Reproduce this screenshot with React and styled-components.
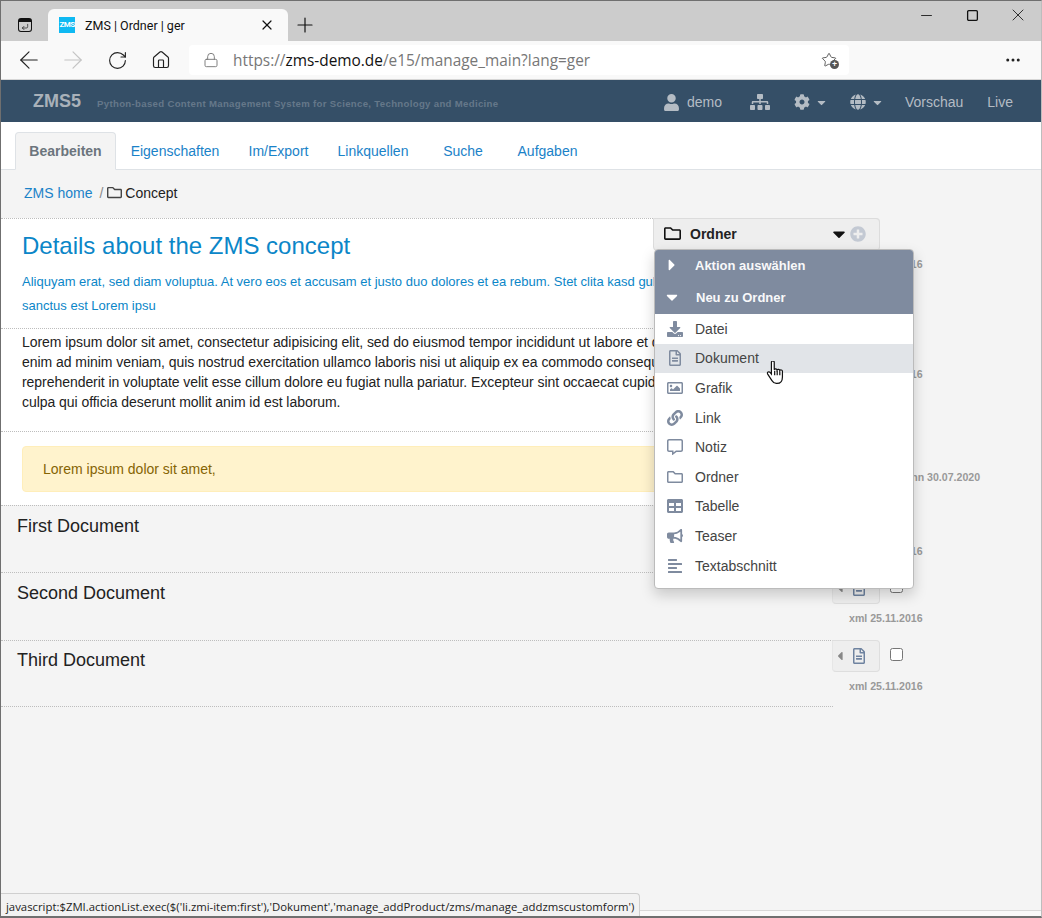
import React from 'react';
import styled, { createGlobalStyle } from 'styled-components';
import { ArrowLeft, ArrowRight, RotateCw, Home, Lock, Plus, X, Minus, Square, MoreHorizontal, Star, CornerDownLeft } from 'lucide-react';
import {
  FaUser, FaSitemap, FaCog, FaGlobe, FaRegFolder, FaCaretDown, FaCaretRight, FaCaretLeft,
  FaPlusCircle, FaDownload, FaRegFileAlt, FaRegImage, FaLink, FaRegCommentAlt, FaTable, FaBullhorn, FaAlignLeft,
} from 'react-icons/fa';

const GlobalStyle = createGlobalStyle`
  html, body { margin: 0; padding: 0; background: #f4f4f4; }
  body { font-family: "Liberation Sans", Arial, sans-serif; font-size: 14px; color: #222; }
  * { box-sizing: border-box; }
`;

const Window = styled.div`
  position: relative;
  width: 1042px;
  height: 918px;
  overflow: hidden;
  background: #f4f4f4;
  border: 1px solid #6f6f6f;
  border-bottom: 2px solid #6f6f6f;
  border-right: 1px solid #bdbdbd;
`;

const TabStrip = styled.div`
  height: 40px;
  background: #cccccc;
  display: flex;
  align-items: flex-end;
  padding-left: 47px;
`;

const WorkspaceIcon = styled.div`
  position: absolute;
  left: 17px;
  top: 17px;
  width: 14px;
  height: 14px;
  border: 1.500px solid #111;
  border-top-width: 4px;
  border-radius: 3px;
  display: flex;
  align-items: center;
  justify-content: center;
  color: #111;
`;

const BrowserTab = styled.div`
  width: 240px;
  height: 32px;
  background: #f9f9f9;
  border-radius: 6px 6px 0 0;
  display: flex;
  align-items: center;
  padding: 0 13px 0 11px;
  font-family: Roboto, sans-serif;
  font-size: 12.5px;
  color: #111;
`;

const Favicon = styled.span`
  width: 16px;
  height: 16px;
  background: #0fb9f2;
  color: #fff;
  font-size: 8px;
  line-height: 16px;
  text-align: center;
  font-weight: 700;
  margin-right: 10px;
  letter-spacing: -0.6px;
`;

const TabTitle = styled.span`
  flex: 1;
`;

const NewTab = styled.div`
  margin: 0 0 4px 5px;
  display: flex;
  color: #111;
`;

const WindowControls = styled.div`
  position: absolute;
  top: 4px;
  right: 0;
  display: flex;
  color: #111;
`;

const ControlSlot = styled.span`
  width: 46px;
  height: 20px;
  display: flex;
  align-items: center;
  justify-content: center;
`;

const Toolbar = styled.div`
  height: 39px;
  background: #f9f9f9;
  border-bottom: 1px solid #d6d6d6;
  display: flex;
  align-items: center;
  padding-left: 6px;
`;

const NavButton = styled.span`
  display: flex;
  justify-content: center;
  width: 44px;
  color: ${(p) => (p.$off ? '#c4c4c4' : '#222')};
`;

const AddressBar = styled.div`
  width: 660px;
  height: 30px;
  margin-left: 6px;
  background: #fff;
  border-radius: 4px;
  display: flex;
  align-items: center;
  padding: 0 12px 0 14px;
  font-family: "Open Sans", sans-serif;
  font-size: 15.4px;
  color: #777;
`;

const Url = styled.span`
  margin-left: 14px;
  flex: 1;
  b { font-weight: 400; color: #111; }
`;

const FavWrap = styled.span`
  position: relative;
  display: flex;
  color: #555;
  &::after {
    content: '+';
    position: absolute;
    right: -2px;
    bottom: -1px;
    width: 9px;
    height: 9px;
    border-radius: 50%;
    background: #555;
    color: #fff;
    font-size: 9px;
    line-height: 8px;
    text-align: center;
    font-weight: 700;
  }
`;

const MoreButton = styled.span`
  display: flex;
  margin-left: 155px;
  color: #222;
`;

const NavBar = styled.nav`
  height: 42px;
  background: #354f67;
  display: flex;
  align-items: center;
  padding: 2px 0 0 32px;
  color: #b4bcc4;
`;

const Brand = styled.span`
  font-size: 18px;
  font-weight: 700;
  color: #a9b1b9;
  margin-top: -2px;
`;

const Slogan = styled.span`
  margin: 3px 0 0 16px;
  font-size: 9.6px;
  font-weight: 700;
  letter-spacing: 0.33px;
  color: #65788a;
  flex: 1;
`;

const NavItem = styled.span`
  display: flex;
  align-items: center;
  gap: ${(p) => p.$gap || 0}px;
  margin-right: ${(p) => p.$mr}px;
  font-size: 14px;
`;

const TabBar = styled.div`
  height: 48px;
  background: #fff;
  border-bottom: 1px solid #dee2e6;
  display: flex;
  align-items: flex-end;
  padding-left: 14px;
`;

const Tab = styled.a`
  height: 38px;
  width: ${(p) => p.$w}px;
  margin-bottom: -1px;
  display: flex;
  align-items: center;
  justify-content: center;
  font-size: 14px;
  color: ${(p) => (p.$active ? '#6c757d' : '#1a82c8')};
  font-weight: ${(p) => (p.$active ? 700 : 400)};
  background: ${(p) => (p.$active ? '#f4f4f4' : 'transparent')};
  border: 1px solid ${(p) => (p.$active ? '#dee2e6' : 'transparent')};
  border-bottom-color: ${(p) => (p.$active ? '#f4f4f4' : 'transparent')};
  border-radius: 4px 4px 0 0;
`;

const Breadcrumb = styled.div`
  height: 48px;
  display: flex;
  align-items: center;
  padding: 0 0 3px 23px;
  font-size: 14px;
  color: #222;
`;

const Crumb = styled.a`
  color: #1a82c8;
`;

const CrumbDivider = styled.span`
  color: #8a8a8a;
  margin: 0 4px 0 7px;
`;

const CrumbIcon = styled.span`
  display: flex;
  margin-right: 3px;
  color: #444;
`;

const Row = styled.section`
  display: grid;
  grid-template-columns: 832px 1fr;
  height: ${(p) => p.$h}px;
`;

const RowMain = styled.div`
  border-top: 1px dotted #bdbdbd;
  background: ${(p) => (p.$plain ? 'transparent' : '#fff')};
  padding: ${(p) => p.$pad};
  ${(p) => p.$last && 'border-bottom: 1px dotted #bdbdbd;'}
`;

const RowSide = styled.div`
  display: grid;
  grid-template-columns: 48px auto;
  grid-template-rows: 32px auto;
  column-gap: 10px;
  row-gap: 8px;
  align-content: start;
  justify-content: start;
  align-items: center;
  margin-left: -1px;
`;

const ActionBox = styled.div`
  height: 32px;
  background: #eeeeee;
  border: 1px solid #dedede;
  border-left-color: #e6e6e6;
  border-radius: 0 4px 4px 4px;
  display: flex;
  align-items: center;
  gap: 4px;
  color: #6f83a0;
`;

const CaretSlot = styled.span`
  display: flex;
  color: #888;
`;

const Check = styled.input.attrs({ type: 'checkbox' })`
  appearance: none;
  width: 13px;
  height: 13px;
  margin: -3px 0 0;
  background: #fff;
  border: 1px solid #767676;
  border-radius: 2.5px;
`;

const Meta = styled.div`
  grid-column: 1 / 3;
  padding-left: ${(p) => p.$indent || 17}px;
  font-size: 10.6px;
  font-weight: 700;
  color: #999;
  white-space: nowrap;
`;

const Title = styled.h1`
  margin: 0;
  font-size: 24px;
  font-weight: 400;
  line-height: 30px;
  color: #0b86c8;
`;

const Teaser = styled.p`
  margin: 9px 0 0;
  font-size: 13px;
  line-height: 24px;
  color: #0b86c8;
  white-space: nowrap;
`;

const Body = styled.p`
  margin: 0;
  font-size: 14px;
  line-height: 20px;
  letter-spacing: -0.05px;
  color: #222;
  white-space: nowrap;
`;

const Alert = styled.div`
  height: 46px;
  background: #fff3cd;
  border: 1px solid #ffeeba;
  border-radius: 4px;
  padding: 0 20px;
  display: flex;
  align-items: center;
  color: #856404;
  font-size: 14px;
`;

const DocTitle = styled.h2`
  margin: 0;
  font-size: 18px;
  line-height: 22px;
  font-weight: 400;
  color: #222;
`;

const FolderHead = styled.div`
  position: absolute;
  left: 652px;
  top: 217px;
  width: 227px;
  height: 33px;
  background: #eeeeee;
  border: 1px solid #dcdcdc;
  border-radius: 0 4px 4px 4px;
  display: flex;
  align-items: center;
  padding: 0 13px 2px 10px;
  font-weight: 700;
  color: #222;
  z-index: 2;
`;

const FolderLabel = styled.span`
  margin-left: 9px;
  flex: 1;
`;

const AddIcon = styled.span`
  display: flex;
  margin-left: 1px;
  color: #c3c9d3;
`;

const Dropdown = styled.div`
  position: absolute;
  left: 653px;
  top: 248px;
  width: 260px;
  height: 340px;
  background: #fff;
  border: 1px solid #bbb;
  border-radius: 4px;
  box-shadow: 0 6px 14px rgba(0, 0, 0, 0.18);
  overflow: hidden;
  z-index: 3;
`;

const MenuHead = styled.div`
  height: 32px;
  background: #7f8b9f;
  color: #fff;
  font-size: 13px;
  font-weight: 700;
  display: flex;
  align-items: center;
  padding: 0 0 2px 8px;
`;

const MenuHeadLabel = styled.span`
  margin-left: ${(p) => p.$ml}px;
  opacity: 0.95;
`;

const MenuItem = styled.div`
  height: 29.6px;
  display: flex;
  align-items: center;
  padding-left: 12px;
  font-size: 14px;
  color: #444;
  background: ${(p) => (p.$hover ? '#e1e4e8' : 'transparent')};
`;

const MenuIcon = styled.span`
  width: 16px;
  display: flex;
  color: #7f8b9f;
  margin-right: 12px;
`;

const Pointer = styled.svg`
  position: absolute;
  left: 765px;
  top: 360px;
  z-index: 4;
`;

const BottomRule = styled.div`
  position: absolute;
  left: 0;
  right: 0;
  bottom: 0;
  height: 6px;
  background: #f9f9f9;
  border-top: 1px solid #d8d8d8;
  z-index: 1;
`;

const StatusBubble = styled.div`
  position: absolute;
  left: -1px;
  bottom: -2px;
  height: 25px;
  padding: 0 5px;
  display: flex;
  align-items: center;
  background: #f2f2f2;
  border: 1px solid #cfcfcf;
  border-bottom: 0;
  border-radius: 0 4px 0 0;
  font-family: "Open Sans", sans-serif;
  font-size: 11.35px;
  color: #222;
  z-index: 5;
`;

const menu = [
  ['Datei', FaDownload],
  ['Dokument', FaRegFileAlt, true],
  ['Grafik', FaRegImage],
  ['Link', FaLink],
  ['Notiz', FaRegCommentAlt],
  ['Ordner', FaRegFolder],
  ['Tabelle', FaTable],
  ['Teaser', FaBullhorn],
  ['Textabschnitt', FaAlignLeft],
];

function Side({ meta = 'xml 25.11.2016', indent, noCheck }) {
  return (
    <RowSide>
      <ActionBox>
        <CaretSlot><FaCaretLeft size={14} /></CaretSlot>
        <FaRegFileAlt size={16} />
      </ActionBox>
      {!noCheck && <Check />}
      <Meta $indent={indent}>{meta}</Meta>
    </RowSide>
  );
}

export default function App() {
  return (
    <Window>
      <GlobalStyle />
      <TabStrip>
        <WorkspaceIcon><CornerDownLeft size={8} strokeWidth={2} /></WorkspaceIcon>
        <BrowserTab>
          <Favicon>ZMS</Favicon>
          <TabTitle>ZMS | Ordner | ger</TabTitle>
          <X size={16} strokeWidth={1.8} />
        </BrowserTab>
        <NewTab><Plus size={24} strokeWidth={1.2} /></NewTab>
        <WindowControls>
          <ControlSlot><Minus size={17} strokeWidth={1.2} /></ControlSlot>
          <ControlSlot><Square size={13} strokeWidth={1.3} absoluteStrokeWidth /></ControlSlot>
          <ControlSlot><X size={20} strokeWidth={1} /></ControlSlot>
        </WindowControls>
      </TabStrip>
      <Toolbar>
        <NavButton><ArrowLeft size={28} strokeWidth={1} /></NavButton>
        <NavButton $off><ArrowRight size={28} strokeWidth={1} /></NavButton>
        <NavButton><RotateCw size={21} strokeWidth={1.3} /></NavButton>
        <NavButton><Home size={20} strokeWidth={1.4} /></NavButton>
        <AddressBar>
          <Lock size={16} strokeWidth={1.4} />
          <Url>https://<b>zms-demo.de</b>/e15/manage_main?lang=ger</Url>
          <FavWrap><Star size={16} strokeWidth={1.4} /></FavWrap>
        </AddressBar>
        <MoreButton><MoreHorizontal size={18} /></MoreButton>
      </Toolbar>
      <NavBar>
        <Brand>ZMS5</Brand>
        <Slogan>Python-based Content Management System for Science, Technology and Medicine</Slogan>
        <NavItem $gap={7} $mr={28}><FaUser size={17} />demo</NavItem>
        <NavItem $mr={24}><FaSitemap size={20} /></NavItem>
        <NavItem $gap={5} $mr={22}><FaCog size={16} /><FaCaretDown size={13} /></NavItem>
        <NavItem $gap={5} $mr={21}><FaGlobe size={16} /><FaCaretDown size={13} /></NavItem>
        <NavItem $mr={24}>Vorschau</NavItem>
        <NavItem $mr={28}>Live</NavItem>
      </NavBar>
      <TabBar>
        <Tab $active $w={101}>Bearbeiten</Tab>
        <Tab $w={118}>Eigenschaften</Tab>
        <Tab $w={89}>Im/Export</Tab>
        <Tab $w={100}>Linkquellen</Tab>
        <Tab $w={80}>Suche</Tab>
        <Tab $w={89}>Aufgaben</Tab>
      </TabBar>
      <Breadcrumb>
        <Crumb>ZMS home</Crumb>
        <CrumbDivider>/</CrumbDivider>
        <CrumbIcon><FaRegFolder size={15} /></CrumbIcon>
        Concept
      </Breadcrumb>
      <Row $h={110}>
        <RowMain $pad="12px 21px 0">
          <Title>Details about the ZMS concept</Title>
          <Teaser>
            Aliquyam erat, sed diam voluptua. At vero eos et accusam et justo duo dolores et ea rebum. Stet clita kasd gubergren, no sea takimata<br />
            sanctus est Lorem ipsu
          </Teaser>
        </RowMain>
        <Side noCheck />
      </Row>
      <Row $h={103}>
        <RowMain $pad="3px 21px 0">
          <Body>
            Lorem ipsum dolor sit amet, consectetur adipisicing elit, sed do eiusmod tempor incididunt ut labore et dolore magna aliqua. Ut<br />
            enim ad minim veniam, quis nostrud exercitation ullamco laboris nisi ut aliquip ex ea commodo consequat. Duis aute irure dolor in<br />
            reprehenderit in voluptate velit esse cillum dolore eu fugiat nulla pariatur. Excepteur sint occaecat cupidatat non proident, sunt in<br />
            culpa qui officia deserunt mollit anim id est laborum.
          </Body>
        </RowMain>
        <Side />
      </Row>
      <Row $h={74}>
        <RowMain $pad="14px 21px 0">
          <Alert>Lorem ipsum dolor sit amet,</Alert>
        </RowMain>
        <Side meta="xml Beginn 30.07.2020" indent={35} />
      </Row>
      <Row $h={67}>
        <RowMain $plain $pad="9px 16px 0"><DocTitle>First Document</DocTitle></RowMain>
        <Side />
      </Row>
      <Row $h={68}>
        <RowMain $plain $pad="9px 16px 0"><DocTitle>Second Document</DocTitle></RowMain>
        <Side />
      </Row>
      <Row $h={67}>
        <RowMain $plain $last $pad="8px 16px 0"><DocTitle>Third Document</DocTitle></RowMain>
        <Side />
      </Row>

      <FolderHead>
        <FaRegFolder size={17} color="#111" />
        <FolderLabel>Ordner</FolderLabel>
        <FaCaretDown size={20} color="#111" />
        <AddIcon><FaPlusCircle size={16} /></AddIcon>
      </FolderHead>
      <Dropdown>
        <MenuHead><FaCaretRight size={18} /><MenuHeadLabel $ml={14}>Aktion auswählen</MenuHeadLabel></MenuHead>
        <MenuHead><FaCaretDown size={18} /><MenuHeadLabel $ml={15}>Neu zu Ordner</MenuHeadLabel></MenuHead>
        {menu.map(([label, Icon, hover]) => (
          <MenuItem key={label} $hover={hover}>
            <MenuIcon><Icon size={16} /></MenuIcon>
            {label}
          </MenuItem>
        ))}
      </Dropdown>
      <Pointer width="19" height="24" viewBox="1 1 15.500 22" fill="#fff" stroke="#111" strokeWidth="1.1">
        <path d="M5 2.2c0-1.6 2.6-1.6 2.6 0V9c.4-1 2.4-1 2.6.3.4-1 2.4-.9 2.5.4.6-.8 2.3-.6 2.4.7v5.2c0 3.2-1.6 6-5 6H9.500c-2 0-3-1-4-2.600L1.600 13c-.9-1.600 1-2.800 2.200-1.500L5 13z" />
        <path d="M8 10v4M10.300 10v4M12.700 10.500v3.500" fill="none" />
      </Pointer>
      <BottomRule />
      <StatusBubble>javascript:$ZMI.actionList.exec($('li.zmi-item:first'),'Dokument','manage_addProduct/zms/manage_addzmscustomform')</StatusBubble>
    </Window>
  );
}
